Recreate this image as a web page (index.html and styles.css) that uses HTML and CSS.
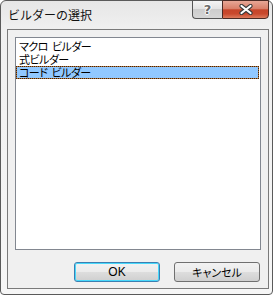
FILE: index.html
```html
<!DOCTYPE html>
<html lang="ja">
<head>
<meta charset="utf-8">
<link rel="stylesheet" href="styles.css">
</head>
<body>
<div class="window">
  <div class="titlebar">
    <span class="title">ビルダーの選択</span>
    <div class="caption">
      <div class="cap-help">?</div>
      <div class="cap-close">
        <svg width="16" height="11" viewBox="0 0 16 11">
          <path d="M3.5 2 L12.5 9 M12.5 2 L3.5 9" stroke="#3a3a3a" stroke-width="4.2" stroke-linecap="round"/>
          <path d="M3.5 2 L12.5 9 M12.5 2 L3.5 9" stroke="#ffffff" stroke-width="2.2" stroke-linecap="round"/>
        </svg>
      </div>
    </div>
  </div>
  <div class="client">
    <div class="listbox">
      <div class="item">マクロ<span class="sp"> </span>ビルダー</div>
      <div class="item">式ビルダー</div>
      <div class="item selected">コード<span class="sp"> </span>ビルダー</div>
    </div>
    <div class="buttons">
      <button class="btn default">OK</button>
      <button class="btn">キャンセル</button>
    </div>
  </div>
</div>
</body>
</html>
```
FILE: styles.css
```css
html, body {
  margin: 0;
  padding: 0;
  background: #ffffff;
}
body {
  width: 275px;
  height: 296px;
  font-family: "Noto Sans CJK JP", "Liberation Sans", sans-serif;
}
.window {
  box-sizing: border-box;
  width: 273px;
  height: 295px;
  border: 1px solid #5a5a5a;
  border-radius: 6px 6px 4px 4px;
  background: linear-gradient(#e6e6e6, #f0f0f0 28px, #f6f6f6);
  display: flex;
  flex-direction: column;
}
.titlebar {
  height: 28px;
  display: flex;
  align-items: flex-start;
  padding: 0 3px 0 7px;
}
.title {
  font-size: 12px;
  line-height: 14px;
  margin-top: 7px;
  color: #111;
}
.caption {
  margin-left: auto;
  margin-top: -1px;
  display: flex;
  height: 19px;
}
.cap-help {
  box-sizing: border-box;
  width: 30px;
  height: 19px;
  border: 1px solid #555;
  border-right: none;
  border-radius: 0 0 0 4px;
  background: linear-gradient(#f4f4f4, #e3e3e3 45%, #cdcdcd 50%, #d6d6d6);
  color: #6a6a6a;
  font-family: "DejaVu Sans", sans-serif;
  font-weight: bold;
  font-size: 13px;
  line-height: 17px;
  text-align: center;
  text-shadow: 0 0 1px #fff, 0 0 1px #fff, 1px 0 0 #fff, -1px 0 0 #fff, 0 1px 0 #fff, 0 -1px 0 #fff;
}
.cap-close {
  box-sizing: border-box;
  width: 47px;
  height: 19px;
  border: 1px solid #4a2a24;
  border-radius: 0 0 4px 0;
  background: linear-gradient(#e7a796, #d9806a 45%, #c6452a 52%, #c9482c 75%, #dd7a5c);
  display: flex;
  align-items: center;
  justify-content: center;
}
.client {
  flex: 1;
  margin: 0 3px 5px 6px;
  border: 1px solid #7a7a7a;
  background: #f0f0f0;
  display: flex;
  flex-direction: column;
  padding: 7px 7px 6px 7px;
}
.listbox {
  flex: 1;
  background: #ffffff;
  border: 1px solid #828790;
  padding: 2px 1px 0 0;
}
.item {
  box-sizing: border-box;
  height: 13px;
  font-size: 11px;
  line-height: 13px;
  padding-left: 3px;
  color: #000;
  white-space: pre;
  letter-spacing: -0.5px;
  font-feature-settings: "palt";
}
.sp {
  display: inline-block;
  width: 4px;
}
.item.selected {
  border: 1px dotted #3a2410;
  padding-left: 2px;
  line-height: 11px;
  background: linear-gradient(#91c8ff, #91c8ff) padding-box, #b9773a border-box;
}
.buttons {
  margin-top: 12px;
  display: flex;
  justify-content: flex-end;
  gap: 14px;
  padding-right: 1px;
}
.btn {
  box-sizing: border-box;
  width: 86px;
  height: 20px;
  margin: 0;
  padding: 0;
  border: 1px solid #707070;
  border-radius: 3px;
  background: linear-gradient(#f2f2f2, #ebebeb 48%, #dddddd 52%, #cfcfcf);
  font-family: "Noto Sans CJK JP", "Liberation Sans", sans-serif;
  font-size: 11px;
  line-height: 16px;
  color: #000;
  font-feature-settings: "palt";
}
.btn.default {
  border-color: #3c7fb1;
  box-shadow: inset 0 0 0 1px #48d8fb;
  font-family: "Liberation Sans", sans-serif;
  font-size: 12px;
}
```
